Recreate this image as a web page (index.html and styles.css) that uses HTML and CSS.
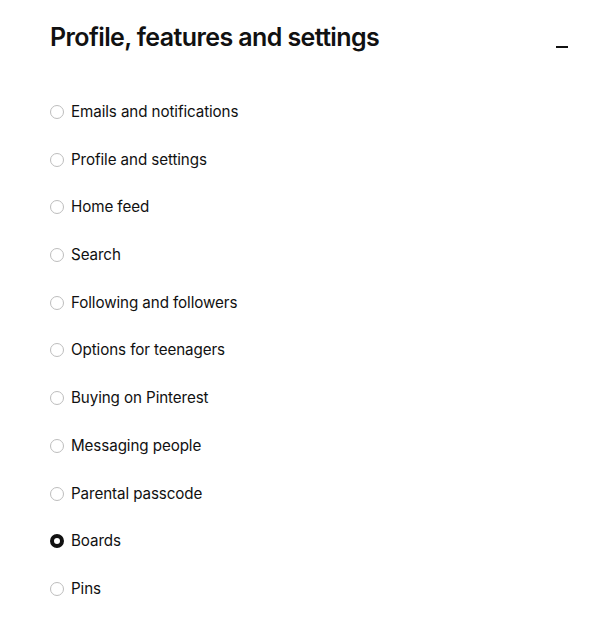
FILE: index.html
```html
<!DOCTYPE html>
<html lang="en">
<head>
<meta charset="UTF-8">
<title>Profile, features and settings</title>
<link rel="stylesheet" href="styles.css">
</head>
<body>
<div class="panel">
    <div class="panel-header">
        <h1>Profile, features and settings</h1>
        <button class="collapse" type="button" aria-label="Collapse"></button>
    </div>
    <form class="topics">
        <label class="topic"><input type="radio" name="topic"><span>Emails and notifications</span></label>
        <label class="topic"><input type="radio" name="topic"><span>Profile and settings</span></label>
        <label class="topic"><input type="radio" name="topic"><span>Home feed</span></label>
        <label class="topic"><input type="radio" name="topic"><span>Search</span></label>
        <label class="topic"><input type="radio" name="topic"><span>Following and followers</span></label>
        <label class="topic"><input type="radio" name="topic"><span>Options for teenagers</span></label>
        <label class="topic"><input type="radio" name="topic"><span>Buying on Pinterest</span></label>
        <label class="topic"><input type="radio" name="topic"><span>Messaging people</span></label>
        <label class="topic"><input type="radio" name="topic"><span>Parental passcode</span></label>
        <label class="topic"><input type="radio" name="topic" checked><span>Boards</span></label>
        <label class="topic"><input type="radio" name="topic"><span>Pins</span></label>
    </form>
</div>
</body>
</html>
```

FILE: styles.css
```css
body {
    margin: 0;
    background: #fff;
    color: #111;
    font-family: Inter, "Noto Sans", sans-serif;
}

.panel {
    padding: 20px 32px 0 50px;
}

.panel-header {
    display: flex;
    justify-content: space-between;
    align-items: flex-start;
}

h1 {
    margin: 0;
    font-size: 25px;
    font-weight: 600;
    letter-spacing: -0.6px;
    line-height: 34px;
}

.collapse {
    width: 12px;
    height: 2px;
    margin-top: 26px;
    padding: 0;
    border: none;
    background: #111;
}

.topics {
    margin-top: 48px;
    display: flex;
    flex-direction: column;
    gap: 27.7px;
}

.topic {
    display: flex;
    align-items: center;
    gap: 7px;
    font-size: 15.2px;
    line-height: 20px;
    letter-spacing: -0.1px;
}

.topic input {
    appearance: none;
    margin: 0;
    width: 14px;
    height: 14px;
    border: 1.5px solid #bdbdbd;
    border-radius: 50%;
    background: #fff;
}

.topic input:checked {
    border: 4.5px solid #111;
    background: #fff;
}
```
